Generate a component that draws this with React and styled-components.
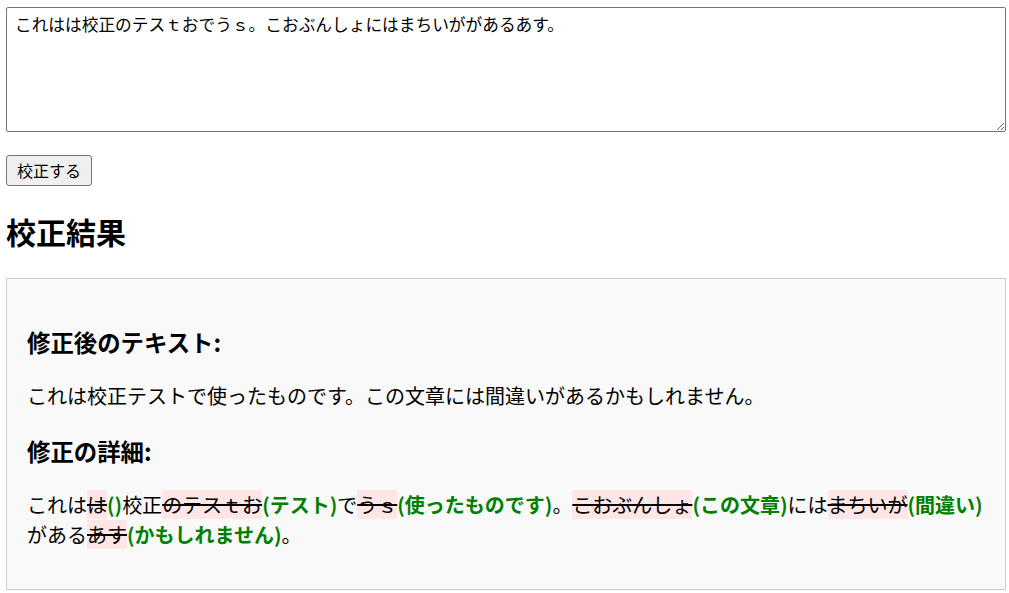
import React, { useState } from 'react';
import styled, { createGlobalStyle } from 'styled-components';

const GlobalStyle = createGlobalStyle`
  body {
    margin: 0;
    background: #fff;
    color: #000;
    font-family: "Noto Sans CJK JP", "Noto Sans", sans-serif;
    font-size: 20px;
  }
`;

const Page = styled.div`
  width: 1000px;
  padding: 7px 0 0 6px;
`;

const Input = styled.textarea`
  display: block;
  box-sizing: border-box;
  width: 1000px;
  height: 125px;
  margin: 0;
  padding: 4px 8px;
  font-family: "Noto Sans CJK JP", sans-serif;
  font-size: 16.7px;
  line-height: 24px;
  color: #000;
  border: 1px solid #767676;
  border-radius: 2px;
`;

const SubmitButton = styled.button`
  display: block;
  margin: 23px 0 0;
  padding: 3px 10px;
  height: 31px;
  font-family: "Noto Sans CJK JP", sans-serif;
  font-size: 16px;
  line-height: 23px;
  color: #000;
  background: #efefef;
  border: 1px solid #767676;
  border-radius: 3px;
`;

const Title = styled.h2`
  font-size: 30px;
  line-height: 45px;
  font-weight: 700;
  margin: 23px 0 24px;
`;

const ResultBox = styled.div`
  box-sizing: border-box;
  width: 1000px;
  padding: 23px 20px 20px;
  background: #f9f9f9;
  border: 1px solid #ccc;
`;

const SectionTitle = styled.h3`
  font-size: 23.4px;
  line-height: 34px;
  font-weight: 700;
  margin: 23.4px 0 22px;
`;

const Paragraph = styled.p`
  font-size: 20px;
  line-height: 29.5px;
  margin: 20px 0;
`;

const Removed = styled.span`
  text-decoration: line-through;
  background: #ffe6e6;
`;

const Added = styled.span`
  color: #008000;
  font-weight: 700;
`;

const diffs = [
  { t: 'これは' },
  { del: 'は', add: '()' },
  { t: '校正' },
  { del: 'のテスｔお', add: '(テスト)' },
  { t: 'で' },
  { del: 'うｓ', add: '(使ったものです)' },
  { t: '。' },
  { del: 'こおぶんしょ', add: '(この文章)' },
  { t: 'には' },
  { del: 'まちいが', add: '(間違い)' },
  { t: 'がある' },
  { del: 'あす', add: '(かもしれません)' },
  { t: '。' },
];

export default function App() {
  const [text, setText] = useState('これはは校正のテスｔおでうｓ。こおぶんしょにはまちいががあるあす。');

  return (
    <Page>
      <GlobalStyle />
      <Input value={text} onChange={(e) => setText(e.target.value)} />
      <SubmitButton>校正する</SubmitButton>
      <Title>校正結果</Title>
      <ResultBox>
        <SectionTitle>修正後のテキスト:</SectionTitle>
        <Paragraph>これは校正テストで使ったものです。この文章には間違いがあるかもしれません。</Paragraph>
        <SectionTitle>修正の詳細:</SectionTitle>
        <Paragraph>
          {diffs.map((d, i) =>
            d.t ? (
              <React.Fragment key={i}>{d.t}</React.Fragment>
            ) : (
              <React.Fragment key={i}>
                <Removed>{d.del}</Removed>
                <Added>{d.add}</Added>
              </React.Fragment>
            )
          )}
        </Paragraph>
      </ResultBox>
    </Page>
  );
}
